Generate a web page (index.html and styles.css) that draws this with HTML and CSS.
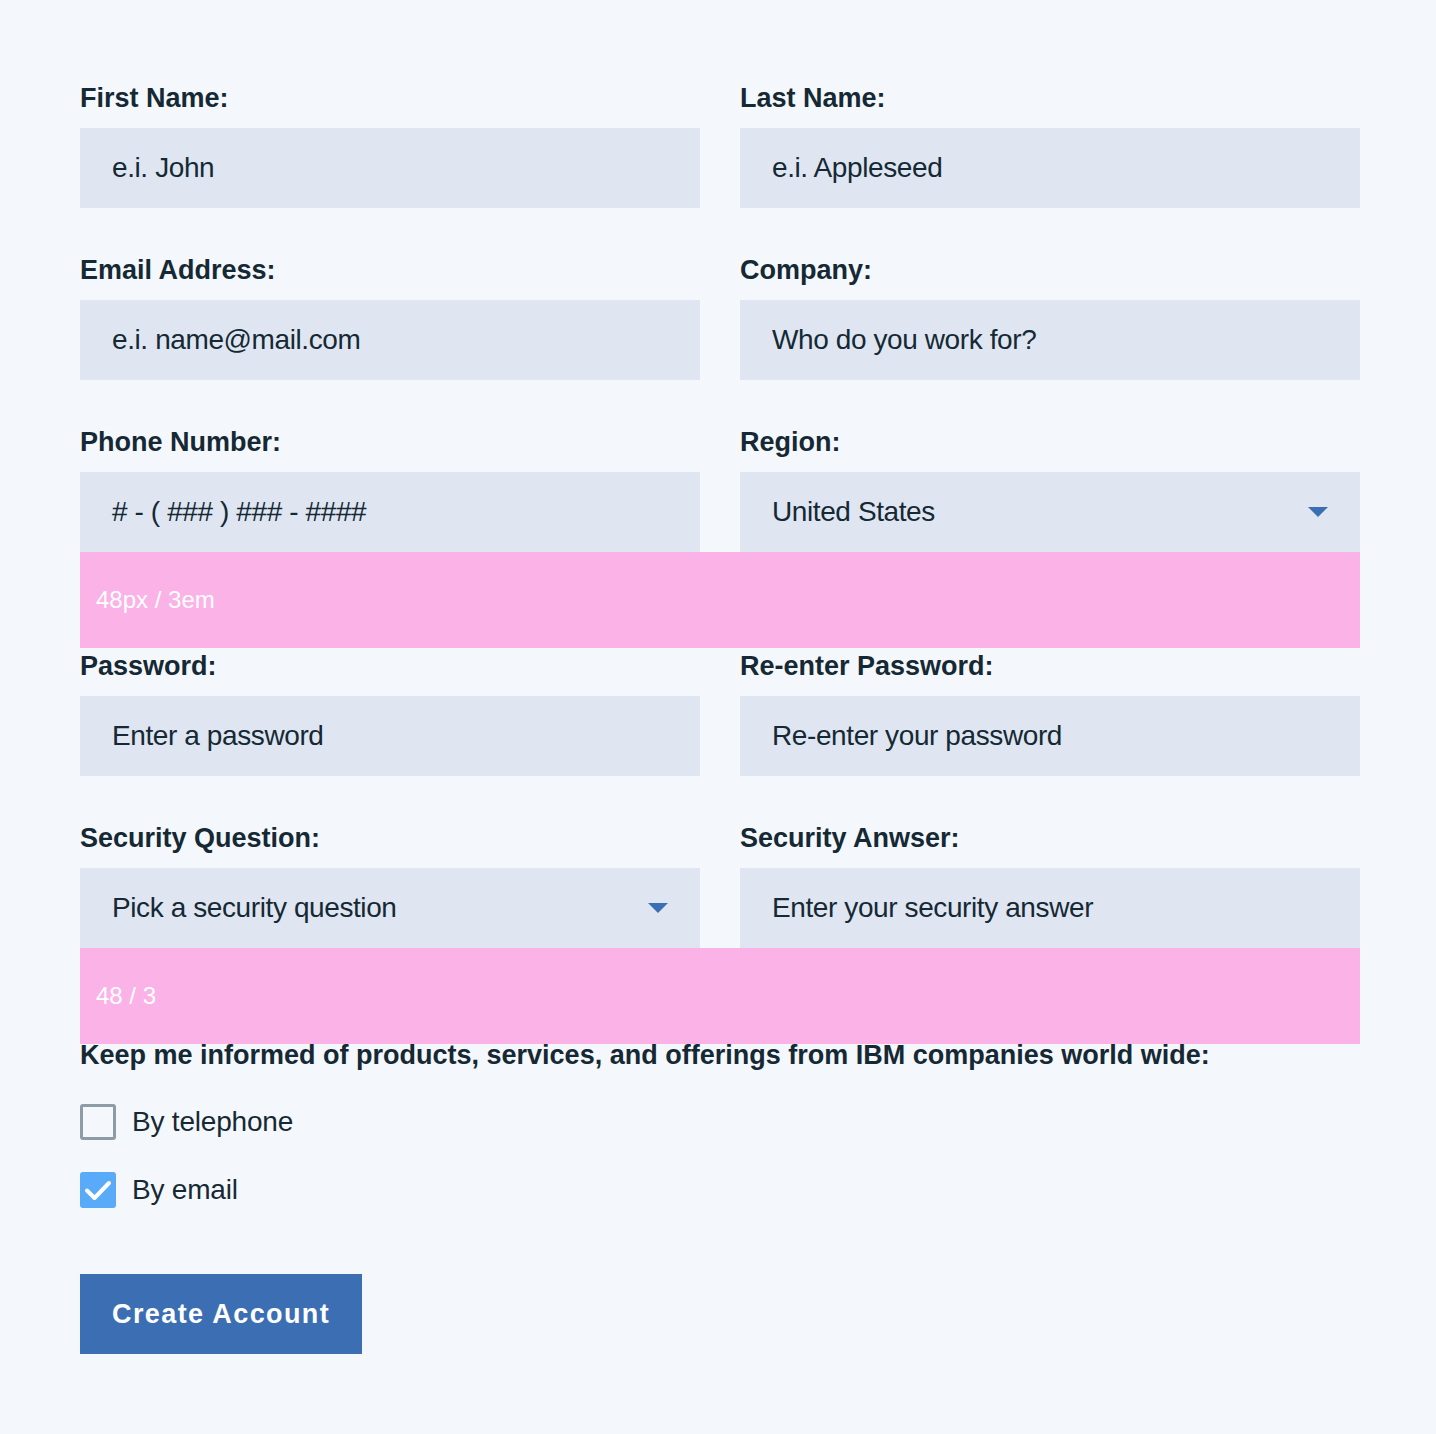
FILE: index.html
```html
<!DOCTYPE html>
<html>
<head>
<meta charset="utf-8">
<link rel="stylesheet" href="styles.css">
</head>
<body>
<form class="form">
  <div class="grid">
    <div class="field">
      <label class="label">First Name:</label>
      <div class="input">e.i. John</div>
    </div>
    <div class="field">
      <label class="label">Last Name:</label>
      <div class="input">e.i. Appleseed</div>
    </div>
    <div class="field">
      <label class="label">Email Address:</label>
      <div class="input">e.i. name@mail.com</div>
    </div>
    <div class="field">
      <label class="label">Company:</label>
      <div class="input">Who do you work for?</div>
    </div>
    <div class="field">
      <label class="label">Phone Number:</label>
      <div class="input">#&nbsp;-&nbsp;(&nbsp;###&nbsp;)&nbsp;###&nbsp;-&nbsp;####</div>
    </div>
    <div class="field">
      <label class="label">Region:</label>
      <div class="input select">United States<span class="caret"></span></div>
    </div>
  </div>
  <div class="spacer spacer-a"><div class="annot">48px / 3em</div></div>
  <div class="grid">
    <div class="field">
      <label class="label">Password:</label>
      <div class="input">Enter a password</div>
    </div>
    <div class="field">
      <label class="label">Re-enter Password:</label>
      <div class="input">Re-enter your password</div>
    </div>
    <div class="field">
      <label class="label">Security Question:</label>
      <div class="input select">Pick a security question<span class="caret"></span></div>
    </div>
    <div class="field">
      <label class="label">Security Anwser:</label>
      <div class="input">Enter your security answer</div>
    </div>
  </div>
  <div class="spacer spacer-b"><div class="annot">48 / 3</div></div>
  <div class="label keep">Keep me informed of products, services, and offerings from IBM companies world wide:</div>
  <div class="checks">
    <div class="check"><span class="box"></span><span>By telephone</span></div>
    <div class="check"><span class="box checked"><svg width="36" height="36" viewBox="0 0 36 36"><path d="M7 18.5 L14.5 26 L29 11" fill="none" stroke="#ffffff" stroke-width="4" stroke-linecap="round" stroke-linejoin="round"/></svg></span><span>By email</span></div>
  </div>
  <button type="button" class="btn">Create Account</button>
</form>
</body>
</html>
```
FILE: styles.css
```css
html, body {
  margin: 0;
  padding: 0;
  background: #f4f7fb;
}
body {
  font-family: "Liberation Sans", Arial, Helvetica, sans-serif;
  color: #152935;
}
.form {
  padding: 84px 76px 80px 80px;
  width: 1280px;
}
.grid {
  display: grid;
  grid-template-columns: 620px 620px;
  column-gap: 40px;
  row-gap: 48px;
}
.field {
  display: flex;
  flex-direction: column;
}
.label {
  display: block;
  font-size: 27px;
  font-weight: 700;
  line-height: 28px;
  height: 32px;
  margin-bottom: 12px;
  white-space: nowrap;
}
.input {
  height: 80px;
  box-sizing: border-box;
  background: #dfe6f1;
  padding: 0 32px;
  display: flex;
  align-items: center;
  font-size: 28px;
  color: #152935;
  letter-spacing: -0.4px;
}
.select {
  justify-content: space-between;
}
.caret {
  width: 0;
  height: 0;
  border-left: 10px solid transparent;
  border-right: 10px solid transparent;
  border-top: 10px solid #3c6eb4;
}
.spacer {
  position: relative;
}
.spacer-a { height: 100px; }
.spacer-b { height: 93px; }
.annot {
  position: absolute;
  left: 0;
  top: 0;
  width: 1280px;
  height: 96px;
  background: #fab2e7;
  color: #ffffff;
  font-size: 24px;
  line-height: 96px;
  padding-left: 16px;
  box-sizing: border-box;
  z-index: 2;
}
.keep {
  margin-bottom: 31px;
}
.checks {
  display: flex;
  flex-direction: column;
  gap: 32px;
}
.check {
  display: flex;
  align-items: center;
  gap: 16px;
  font-size: 28px;
  height: 36px;
  letter-spacing: -0.2px;
}
.box {
  width: 36px;
  height: 36px;
  box-sizing: border-box;
  border: 3px solid #8c9ba5;
  border-radius: 3px;
  flex: none;
}
.box.checked {
  border: none;
  background: #5aaafa;
}
.box svg {
  display: block;
}
.btn {
  margin-top: 66px;
  height: 80px;
  padding: 0 32px;
  background: #3c6eb4;
  color: #ffffff;
  border: none;
  font-family: "Liberation Sans", Arial, sans-serif;
  font-size: 27px;
  font-weight: 700;
  letter-spacing: 1.4px;
  cursor: pointer;
}
```
